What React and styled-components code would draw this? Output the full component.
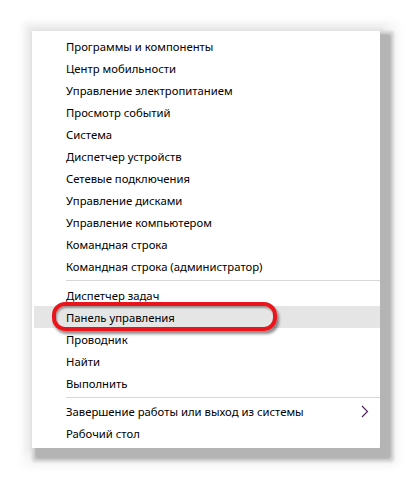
import React from "react";
import styled, { createGlobalStyle } from "styled-components";

const Global = createGlobalStyle`
  html, body { margin: 0; padding: 0; background: #ffffff; }
  body { width: 413px; height: 481px; overflow: hidden; }
`;

const Page = styled.div`
  padding: 31px 0 0 32px;
`;

const Panel = styled.div`
  position: relative;
  width: 346px;
  padding: 4px 0 4px 2px;
  background: #ffffff;
  font-family: "Noto Sans", "Open Sans", sans-serif;
  font-size: 11.3px;
  color: #000;
  box-shadow:
    7px 7px 2px 4px #b4b4b4,
    7px 7px 3px 7px #d2d2d2,
    0 0 0 4px #ebebeb,
    0 0 4px 8px #f1f1f1,
    5px 5px 10px 14px #f6f6f6;
  border-radius: 1px;
`;

const Item = styled.div`
  height: 22px;
  display: flex;
  align-items: center;
  justify-content: space-between;
  padding: 0 10px 0 32px;
  background: ${(p) => (p.$active ? "#e5e5e5" : "transparent")};
  white-space: nowrap;
`;

const Separator = styled.div`
  height: 1px;
  margin: ${(p) => (p.$tight ? "3px 0 2px 32px" : "3px 0 3px 32px")};
  background: #d7d7d7;
`;

const Chevron = styled.svg`
  width: 8px;
  height: 13px;
  margin-right: 1px;
`;

const Marker = styled.div`
  position: absolute;
  left: 20px;
  top: 271px;
  width: 217px;
  height: 21px;
  border: 4px solid #e8161c;
  border-radius: 13px;
  box-shadow: 2px 3px 3px rgba(0, 0, 0, 0.45), inset 1px 2px 2px rgba(0, 0, 0, 0.35);
  pointer-events: none;
`;

const groupA = [
  "Программы и компоненты",
  "Центр мобильности",
  "Управление электропитанием",
  "Просмотр событий",
  "Система",
  "Диспетчер устройств",
  "Сетевые подключения",
  "Управление дисками",
  "Управление компьютером",
  "Командная строка",
  "Командная строка (администратор)",
];

const groupB = ["Диспетчер задач", "Панель управления", "Проводник", "Найти", "Выполнить"];

export default function App() {
  return (
    <>
      <Global />
      <Page>
        <Panel>
          {groupA.map((t) => (
            <Item key={t}>{t}</Item>
          ))}
          <Separator />
          {groupB.map((t) => (
            <Item key={t} $active={t === "Панель управления"}>
              {t}
            </Item>
          ))}
          <Separator $tight />
          <Item>
            Завершение работы или выход из системы
            <Chevron viewBox="0 0 8 13">
              <path d="M1 1 L6.5 6.5 L1 12" fill="none" stroke="#4a1d5c" strokeWidth="1.1" />
            </Chevron>
          </Item>
          <Item>Рабочий стол</Item>
          <Marker />
        </Panel>
      </Page>
    </>
  );
}
